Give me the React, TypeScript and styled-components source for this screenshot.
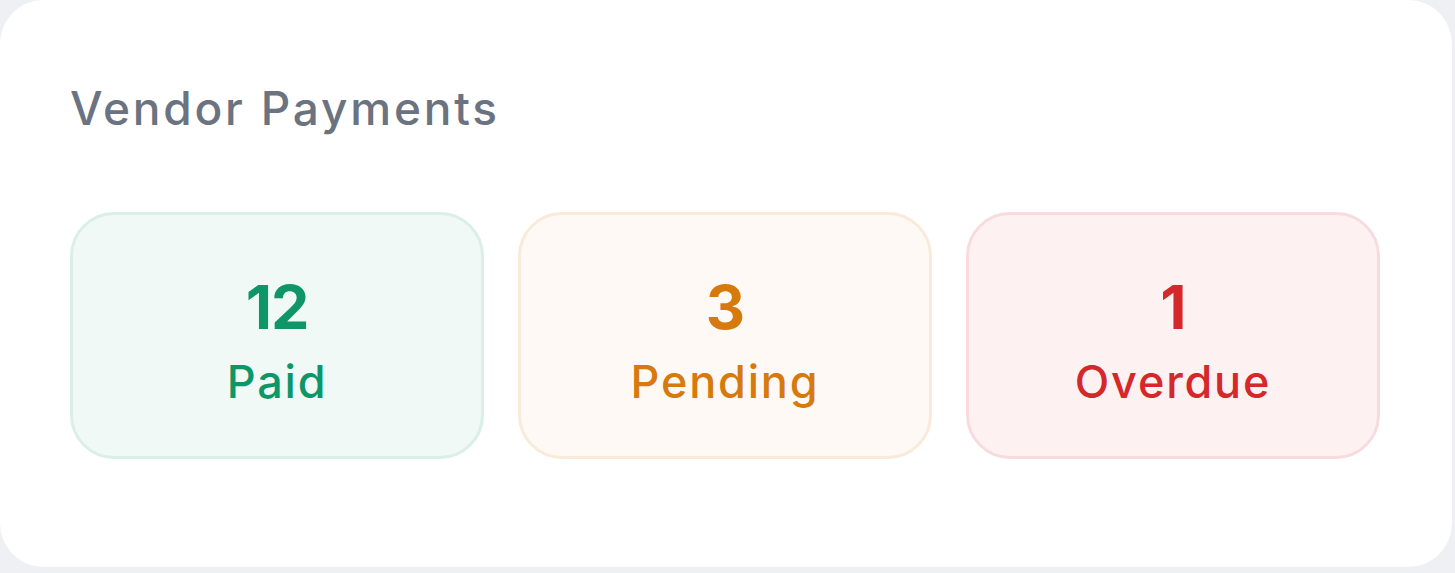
import React from 'react';
import styled, { createGlobalStyle } from 'styled-components';

const GlobalStyle = createGlobalStyle`
  html, body {
    margin: 0;
    padding: 0;
    background: #eef0f4;
  }
  body {
    font-family: Inter, "Noto Sans", "Liberation Sans", sans-serif;
  }
`;

const stats = [
  { value: 12, label: 'Paid', tone: 'green' },
  { value: 3, label: 'Pending', tone: 'amber' },
  { value: 1, label: 'Overdue', tone: 'red' },
] as const;

type Tone = 'green' | 'amber' | 'red';

const tones: Record<Tone, { text: string; bg: string; border: string }> = {
  green: { text: '#0e9668', bg: '#f0f9f5', border: '#d9efe7' },
  amber: { text: '#d67a0e', bg: '#fef9f4', border: '#f9ead9' },
  red: { text: '#d4282b', bg: '#fdf1f2', border: '#f8dcdd' },
};

const Card = styled.section`
  box-sizing: border-box;
  width: 1452px;
  height: 567px;
  background: #ffffff;
  border-radius: 44px;
  padding: 76px 72px 0 70px;
  display: flex;
  flex-direction: column;
`;

const Title = styled.h2`
  margin: 0;
  font-size: 46px;
  font-weight: 500;
  letter-spacing: 2.8px;
  line-height: 64px;
  color: #6b7280;
`;

const StatRow = styled.div`
  margin-top: 72px;
  display: grid;
  grid-template-columns: repeat(3, 414px);
  gap: 34px;
`;

const StatBox = styled.div<{ $tone: Tone }>`
  box-sizing: border-box;
  height: 247px;
  padding-top: 10px;
  border-radius: 44px;
  border: 3px solid ${p => tones[p.$tone].border};
  background: ${p => tones[p.$tone].bg};
  color: ${p => tones[p.$tone].text};
  display: flex;
  flex-direction: column;
  align-items: center;
  justify-content: center;
`;

const Value = styled.div`
  font-size: 61px;
  font-weight: 700;
  line-height: 72px;
  letter-spacing: -1px;
`;

const Label = styled.div`
  margin-top: 10px;
  font-size: 45px;
  font-weight: 500;
  letter-spacing: 1.8px;
  line-height: 58px;
`;

export default function App() {
  return (
    <>
      <GlobalStyle />
      <Card>
        <Title>Vendor Payments</Title>
        <StatRow>
          {stats.map(s => (
            <StatBox key={s.label} $tone={s.tone}>
              <Value>{s.value}</Value>
              <Label>{s.label}</Label>
            </StatBox>
          ))}
        </StatRow>
      </Card>
    </>
  );
}
